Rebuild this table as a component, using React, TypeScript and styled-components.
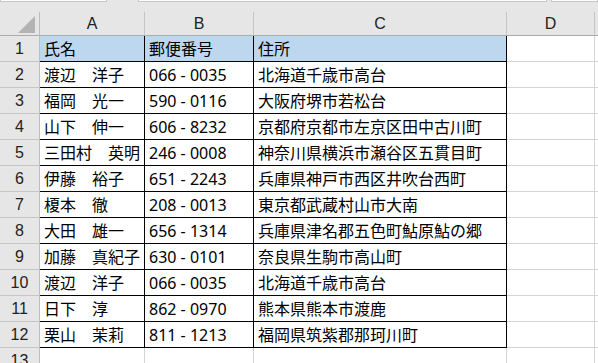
import { Fragment } from 'react';
import styled, { createGlobalStyle } from 'styled-components';

const GlobalStyle = createGlobalStyle`
  html, body {
    margin: 0;
    padding: 0;
    background: #ffffff;
    overflow: hidden;
  }
`;

const Sheet = styled('div')`
  width: 598px;
  height: 363px;
  overflow: hidden;
  background: #e6e6e6;
  font-family: 'Noto Sans', 'Noto Sans CJK JP', sans-serif;
`;

const FormulaStrip = styled('div')`
  height: 12px;
  display: flex;
  align-items: flex-start;
  background: #e6e6e6;
`;

const FormulaBox = styled('div')<{ $w?: number }>`
  box-sizing: border-box;
  height: 2px;
  background: #ffffff;
  border-bottom: 1px solid #c6c6c6;
  border-left: 1px solid #c6c6c6;
  border-right: 1px solid #c6c6c6;
  ${(p) => (p.$w ? `width: ${p.$w}px;` : 'flex: 1;')}
`;

const Gap = styled('div')<{ $w: number }>`
  width: ${(p) => p.$w}px;
`;

const Grid = styled('div')`
  display: grid;
  grid-template-columns: 40px 105px 109px 253px 88px 1fr;
  grid-template-rows: 24px repeat(13, 26px);
  background: #ffffff;
`;

const Corner = styled('div')`
  position: relative;
  box-sizing: border-box;
  background: #e6e6e6;
  border-right: 1px solid #bdbdbd;
  border-bottom: 1px solid #ababab;
`;

const Triangle = styled('div')`
  position: absolute;
  right: 4px;
  bottom: 2px;
  width: 0;
  height: 0;
  border-left: 17px solid transparent;
  border-bottom: 17px solid #b4b4b4;
`;

const ColHead = styled('div')`
  box-sizing: border-box;
  display: flex;
  align-items: center;
  justify-content: center;
  background: #e6e6e6;
  border-right: 1px solid #c4c4c4;
  border-bottom: 1px solid #ababab;
  font-family: 'Liberation Sans', Arial, sans-serif;
  font-size: 16px;
  color: #222222;
`;

const RowHead = styled('div')`
  box-sizing: border-box;
  display: flex;
  align-items: center;
  justify-content: center;
  background: #e6e6e6;
  border-right: 1px solid #bdbdbd;
  border-bottom: 1px solid #c4c4c4;
  font-family: 'Liberation Sans', Arial, sans-serif;
  font-size: 16px;
  color: #222222;
`;

const Cell = styled('div')<{ $boxed?: boolean; $head?: boolean }>`
  box-sizing: border-box;
  display: flex;
  align-items: center;
  padding-left: 4px;
  white-space: nowrap;
  overflow: hidden;
  font-size: 16px;
  line-height: 1;
  color: #000000;
  background: ${(p) => (p.$head ? '#bdd7ee' : '#ffffff')};
  border-right: 1px solid ${(p) => (p.$boxed ? '#000000' : '#d4d4d4')};
  border-bottom: 1px solid ${(p) => (p.$boxed ? '#000000' : '#d4d4d4')};
`;

const rows: [string, string, string][] = [
  ['氏名', '郵便番号', '住所'],
  ['渡辺　洋子', '066 - 0035', '北海道千歳市高台'],
  ['福岡　光一', '590 - 0116', '大阪府堺市若松台'],
  ['山下　伸一', '606 - 8232', '京都府京都市左京区田中古川町'],
  ['三田村　英明', '246 - 0008', '神奈川県横浜市瀬谷区五貫目町'],
  ['伊藤　裕子', '651 - 2243', '兵庫県神戸市西区井吹台西町'],
  ['榎本　徹', '208 - 0013', '東京都武蔵村山市大南'],
  ['大田　雄一', '656 - 1314', '兵庫県津名郡五色町鮎原鮎の郷'],
  ['加藤　真紀子', '630 - 0101', '奈良県生駒市高山町'],
  ['渡辺　洋子', '066 - 0035', '北海道千歳市高台'],
  ['日下　淳', '862 - 0970', '熊本県熊本市渡鹿'],
  ['栗山　茉莉', '811 - 1213', '福岡県筑紫郡那珂川町'],
];

const columns = ['A', 'B', 'C', 'D', ''];

const App = () => {
  return (
    <>
      <GlobalStyle />
      <Sheet>
        <FormulaStrip>
          <FormulaBox $w={107} />
          <Gap $w={31} />
          <FormulaBox $w={409} />
          <Gap $w={4} />
          <FormulaBox />
        </FormulaStrip>
        <Grid>
          <Corner>
            <Triangle />
          </Corner>
          {columns.map((c, i) => (
            <ColHead key={i}>{c}</ColHead>
          ))}
          {rows.map((r, i) => (
            <Fragment key={i}>
              <RowHead>{i + 1}</RowHead>
              {r.map((v, j) => (
                <Cell key={j} $boxed $head={i === 0}>
                  {v}
                </Cell>
              ))}
              <Cell />
              <Cell />
            </Fragment>
          ))}
          <RowHead>13</RowHead>
          <Cell />
          <Cell />
          <Cell />
          <Cell />
          <Cell />
        </Grid>
      </Sheet>
    </>
  );
};

export default App;
